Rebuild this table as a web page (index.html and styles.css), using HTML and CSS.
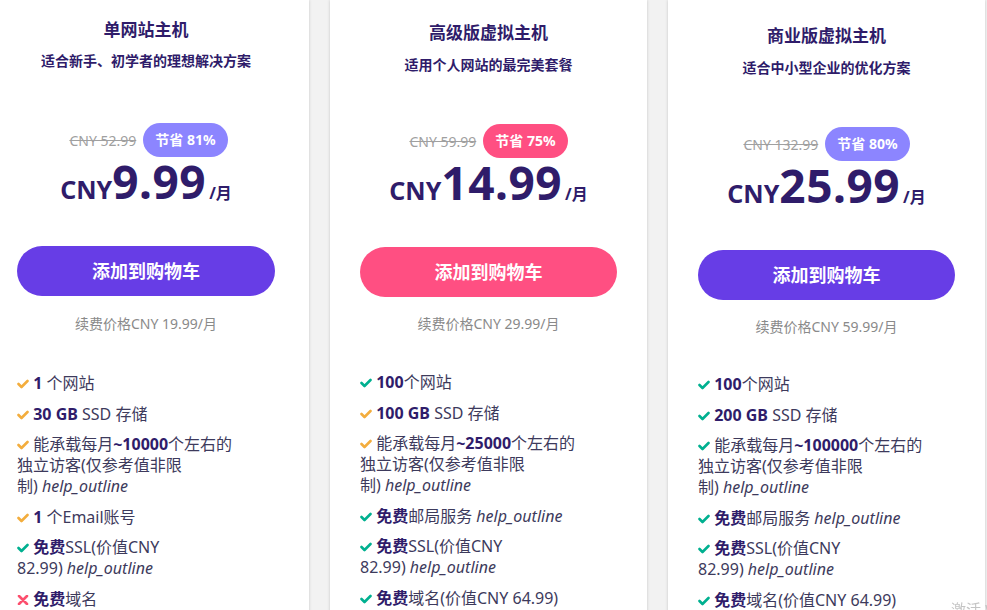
FILE: index.html
```html
<!DOCTYPE html>
<html lang="zh-CN">
<head>
    <meta charset="UTF-8">
    <title>虚拟主机套餐</title>

    <link rel="stylesheet" href="styles.css">

</head>
<body>


<section id="plans">

    <div class="plan plan-single">
        <h3 class="plan_title">单网站主机</h3>
        <p class="plan_sub">适合新手、初学者的理想解决方案</p>
        <div class="plan_old">
            <s>CNY 52.99</s>
            <span class="plan_badge">节省 81%</span>
        </div>
        <div class="plan_price"><span class="cur">CNY</span><span class="num">9.99</span><span class="per">/月</span></div>
        <a class="plan_btn" href="#">添加到购物车</a>
        <p class="plan_renew">续费价格CNY 19.99/月</p>
        <ul class="plan_list">
            <li><svg class="ico ico-orange" viewBox="0 0 12 10"><polyline points="1.5,5 4.5,8 10.5,2"/></svg> <b>1</b> 个网站</li>
            <li><svg class="ico ico-orange" viewBox="0 0 12 10"><polyline points="1.5,5 4.5,8 10.5,2"/></svg> <b>30 GB</b> SSD 存储</li>
            <li><svg class="ico ico-orange" viewBox="0 0 12 10"><polyline points="1.5,5 4.5,8 10.5,2"/></svg> 能承载每月<b>~10000</b>个左右的<br>独立访客(仅参考值非限<br>制) <i>help_outline</i></li>
            <li><svg class="ico ico-orange" viewBox="0 0 12 10"><polyline points="1.5,5 4.5,8 10.5,2"/></svg> <b>1</b> 个Email账号</li>
            <li><svg class="ico ico-green" viewBox="0 0 12 10"><polyline points="1.5,5 4.5,8 10.5,2"/></svg> <b>免费</b>SSL(价值CNY<br>82.99) <i>help_outline</i></li>
            <li><svg class="ico ico-red" viewBox="0 0 12 10"><path d="M2 1 L10 9 M10 1 L2 9"/></svg> <b>免费</b>域名</li>
        </ul>
    </div>

    <div class="plan plan-premium">
        <h3 class="plan_title">高级版虚拟主机</h3>
        <p class="plan_sub">适用个人网站的最完美套餐</p>
        <div class="plan_old">
            <s>CNY 59.99</s>
            <span class="plan_badge plan_badge-pink">节省 75%</span>
        </div>
        <div class="plan_price"><span class="cur">CNY</span><span class="num">14.99</span><span class="per">/月</span></div>
        <a class="plan_btn plan_btn-pink" href="#">添加到购物车</a>
        <p class="plan_renew">续费价格CNY 29.99/月</p>
        <ul class="plan_list">
            <li><svg class="ico ico-green" viewBox="0 0 12 10"><polyline points="1.5,5 4.5,8 10.5,2"/></svg> <b>100</b>个网站</li>
            <li><svg class="ico ico-orange" viewBox="0 0 12 10"><polyline points="1.5,5 4.5,8 10.5,2"/></svg> <b>100 GB</b> SSD 存储</li>
            <li><svg class="ico ico-orange" viewBox="0 0 12 10"><polyline points="1.5,5 4.5,8 10.5,2"/></svg> 能承载每月<b>~25000</b>个左右的<br>独立访客(仅参考值非限<br>制) <i>help_outline</i></li>
            <li><svg class="ico ico-green" viewBox="0 0 12 10"><polyline points="1.5,5 4.5,8 10.5,2"/></svg> <b>免费</b>邮局服务 <i>help_outline</i></li>
            <li><svg class="ico ico-green" viewBox="0 0 12 10"><polyline points="1.5,5 4.5,8 10.5,2"/></svg> <b>免费</b>SSL(价值CNY<br>82.99) <i>help_outline</i></li>
            <li><svg class="ico ico-green" viewBox="0 0 12 10"><polyline points="1.5,5 4.5,8 10.5,2"/></svg> <b>免费</b>域名(价值CNY 64.99)</li>
        </ul>
    </div>

    <div class="plan plan-business">
        <h3 class="plan_title">商业版虚拟主机</h3>
        <p class="plan_sub">适合中小型企业的优化方案</p>
        <div class="plan_old">
            <s>CNY 132.99</s>
            <span class="plan_badge">节省 80%</span>
        </div>
        <div class="plan_price"><span class="cur">CNY</span><span class="num">25.99</span><span class="per">/月</span></div>
        <a class="plan_btn" href="#">添加到购物车</a>
        <p class="plan_renew">续费价格CNY 59.99/月</p>
        <ul class="plan_list">
            <li><svg class="ico ico-green" viewBox="0 0 12 10"><polyline points="1.5,5 4.5,8 10.5,2"/></svg> <b>100</b>个网站</li>
            <li><svg class="ico ico-green" viewBox="0 0 12 10"><polyline points="1.5,5 4.5,8 10.5,2"/></svg> <b>200 GB</b> SSD 存储</li>
            <li><svg class="ico ico-green" viewBox="0 0 12 10"><polyline points="1.5,5 4.5,8 10.5,2"/></svg> 能承载每月<b>~100000</b>个左右的<br>独立访客(仅参考值非限<br>制) <i>help_outline</i></li>
            <li><svg class="ico ico-green" viewBox="0 0 12 10"><polyline points="1.5,5 4.5,8 10.5,2"/></svg> <b>免费</b>邮局服务 <i>help_outline</i></li>
            <li><svg class="ico ico-green" viewBox="0 0 12 10"><polyline points="1.5,5 4.5,8 10.5,2"/></svg> <b>免费</b>SSL(价值CNY<br>82.99) <i>help_outline</i></li>
            <li><svg class="ico ico-green" viewBox="0 0 12 10"><polyline points="1.5,5 4.5,8 10.5,2"/></svg> <b>免费</b>域名(价值CNY 64.99)</li>
        </ul>
    </div>

</section>

<div class="watermark">激活 Windows</div>

</body>
</html>
```

FILE: styles.css
```css
html, body {
    height: 610px;
    overflow: hidden;
}

body {
    margin: 0;
    background-color: #f2f2f2;
    font-family: "Noto Sans", "Noto Sans CJK SC", sans-serif;
    color: #2f1c6a;
}

#plans {
    display: flex;
    flex-flow: row nowrap;
    gap: 21px;
    margin-left: -8px;
}

.plan {
    flex: 0 0 317px;
    box-sizing: border-box;
    height: 640px;
    padding: 21px 30px 0;
    background-color: #fff;
    box-shadow: 0 0 3px rgba(0, 0, 0, .18);
    text-align: center;
}

.plan-single {
    padding: 18px 34px 0 25px;
}

.plan-business {
    padding-top: 24px;
}

.plan_title {
    margin: 0;
    font-size: 17px;
    line-height: 24px;
    font-weight: bold;
}

.plan_sub {
    margin: 10px 0 0;
    font-size: 14px;
    line-height: 20px;
    font-weight: bold;
}

.plan-single .plan_sub {
    margin-top: 9px;
}

.plan_old {
    display: flex;
    flex-flow: row nowrap;
    justify-content: center;
    align-items: center;
    gap: 7px;
    margin-top: 49px;
    height: 34px;
}

.plan-single .plan_old {
    margin-top: 52px;
    padding-left: 5px;
}

.plan_old s {
    font-size: 14px;
    color: #a0a0a0;
}

.plan_badge {
    height: 34px;
    line-height: 34px;
    padding: 0 12px;
    border-radius: 17px;
    background-color: #8c85ff;
    color: #fff;
    font-size: 14px;
    font-weight: bold;
}

.plan_badge-pink {
    background-color: #ff4f82;
}

.plan_price {
    display: flex;
    flex-flow: row nowrap;
    justify-content: center;
    align-items: baseline;
    height: 48px;
    line-height: 48px;
    font-weight: bold;
}

.plan_price .cur {
    font-size: 25px;
}

.plan_price .num {
    font-size: 46px;
    letter-spacing: .5px;
}

.plan_price .per {
    margin-left: 3px;
    font-size: 16px;
}

.plan_btn {
    display: block;
    margin-top: 41px;
    height: 50px;
    line-height: 50px;
    border-radius: 25px;
    background-color: #673de6;
    color: #fff;
    font-size: 18px;
    font-weight: bold;
    text-decoration: none;
}

.plan_btn-pink {
    background-color: #ff4f82;
}

.plan_renew {
    margin: 17px 0 0;
    font-size: 14px;
    line-height: 20px;
    color: #8a8a8a;
}

.plan-single .plan_renew {
    margin-top: 18px;
}

.plan_list {
    margin: 38px 0 0;
    padding: 0;
    list-style: none;
    text-align: left;
}

.plan-single .plan_list {
    margin-top: 39px;
}

.plan-business .plan_list {
    margin-top: 37px;
}

.plan_list li {
    margin-bottom: 9.5px;
    font-size: 16px;
    line-height: 21px;
    color: #3d3a5c;
}

.plan_list b {
    color: #2f1c6a;
}

.plan_list i {
    color: #3d3a5c;
}

.ico {
    width: 12px;
    height: 10px;
    fill: none;
    stroke-width: 2.6;
    stroke-linecap: round;
    stroke-linejoin: round;
}

.ico-orange {
    stroke: #f3ad3d;
}

.ico-green {
    stroke: #00b090;
}

.ico-red {
    stroke: #fc4f6e;
}

.watermark {
    position: fixed;
    right: -62px;
    bottom: -9px;
    font-size: 15px;
    color: #c4c4c4;
}
```
